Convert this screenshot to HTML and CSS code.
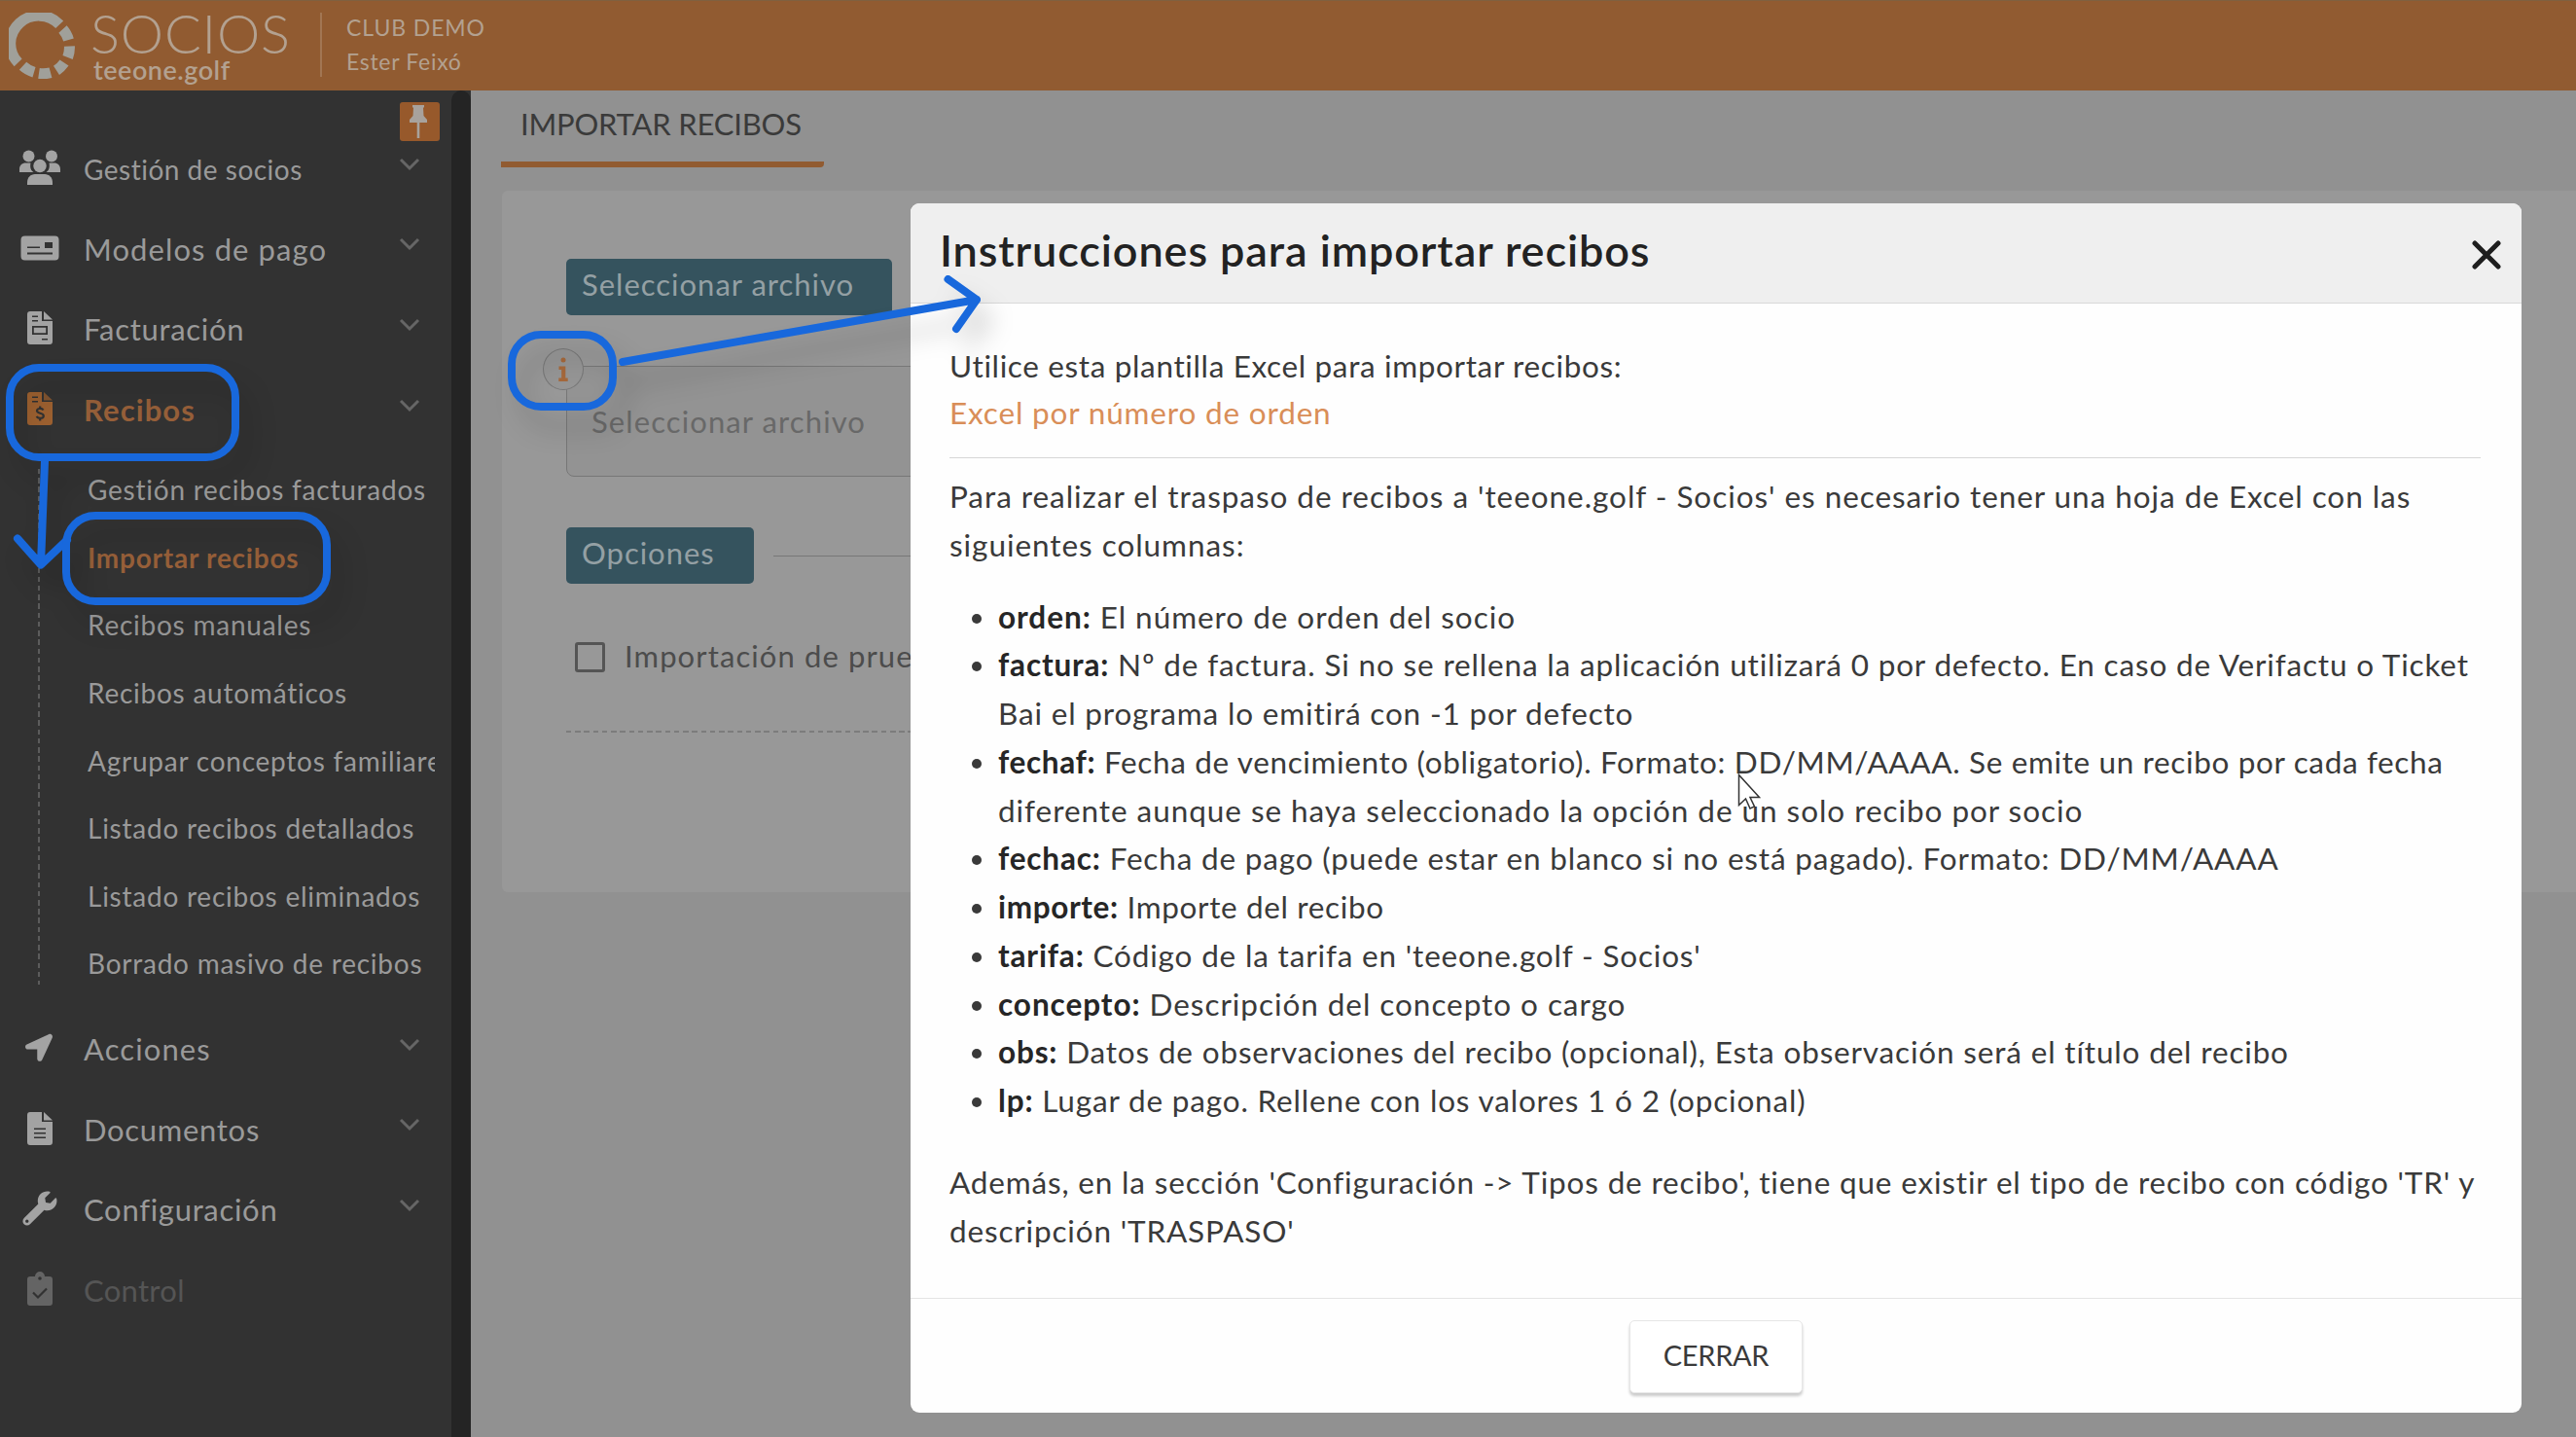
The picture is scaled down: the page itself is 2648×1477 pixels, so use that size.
FILE: index.html
```
<!DOCTYPE html>
<html lang="es">
<head>
  <meta charset="UTF-8">
  <meta name="viewport" content="width=device-width, initial-scale=1.0">
  <title>Socios - Importar recibos</title>
  <link rel="stylesheet" href="styles.css">
</head>
<body>
  <!-- Header -->
  <header class="topbar">
    <svg class="logo-ring" viewBox="0 0 68 68">
      <path d="M9.6 51.4A29 28.5 0 0 1 52.2 12.2" />
      <path d="M55.500 17A29 28.5 0 0 1 61.500 28" />
      <path d="M62.4 34.500A29 28.5 0 0 1 60.6 46" />
      <path d="M57 51.500A29 28.5 0 0 1 49 59.3" />
      <path d="M43 61.7A29 28.5 0 0 1 31 62.4" />
      <path d="M26 61.2A29 28.5 0 0 1 14.5 54.8" />
    </svg>
    <div class="brand">
      <div class="brand-name">SOCIOS</div>
      <div class="brand-site">teeone.golf</div>
    </div>
    <div class="account">
      <div class="account-club">CLUB DEMO</div>
      <div class="account-user">Ester Feixó</div>
    </div>
  </header>

  <div class="layout">
    <!-- Sidebar -->
    <aside class="sidebar">
      <nav class="menu">
        <div class="pin">
          <svg viewBox="0 0 18 34"><path d="M3 0h12v2.500h-1l.500 8.500 3.500 4v3h-7.700v16H7.700V18H0v-3l3.500-4L4 2.500H3z"/></svg>
        </div>
        <div class="menu-item small">
          <svg class="menu-icon" viewBox="0 0 42 36">
            <circle cx="9.5" cy="6.500" r="6"/><circle cx="33" cy="6.500" r="6"/>
            <path d="M0 23v-3c0-4 2.500-6.500 6.500-6.500h5c-1 5 .5 8 3 9.500zM42 23v-3c0-4-2.500-6.500-6.500-6.500h-5c1 5-.5 8-3 9.500z"/>
            <circle cx="21" cy="16.500" r="6.700"/>
            <path d="M8 36v-2.500c0-5 3.500-8.500 8-8.500h10c4.500 0 8 3.500 8 8.500V36z"/>
          </svg>
          <span class="menu-label">Gestión de socios</span>
          <svg class="chevron" viewBox="0 0 22 14"><path d="M2 2l9 9 9-9"/></svg>
        </div>
        <div class="menu-item">
          <svg class="menu-icon" viewBox="0 0 42 36">
            <path fill-rule="evenodd" d="M5.500 5.500h31a4 4 0 0 1 4 4v17a4 4 0 0 1-4 4h-31a4 4 0 0 1-4-4v-17a4 4 0 0 1 4-4zM26 12v6h8v-6zM8 16.500v1.500h13v-1.500zM8 22.500v2h26v-2z"/>
          </svg>
          <span class="menu-label loose">Modelos de pago</span>
          <svg class="chevron" viewBox="0 0 22 14"><path d="M2 2l9 9 9-9"/></svg>
        </div>
        <div class="menu-item">
          <svg class="menu-icon" viewBox="0 0 42 36">
            <path fill-rule="evenodd" d="M11 1h12v10h11v21a3 3 0 0 1-3 3H11a3 3 0 0 1-3-3V4a3 3 0 0 1 3-3zM13 5.500V7h6V5.500zM13 10v1.500h6V10zM13 16v9h16v-9zM14.800 17.800h12.400v5.400H14.800zM23 29v1.500h6V29z"/>
            <path d="M25 1l9 8.500h-9z"/>
          </svg>
          <span class="menu-label">Facturación</span>
          <svg class="chevron" viewBox="0 0 22 14"><path d="M2 2l9 9 9-9"/></svg>
        </div>
        <div class="menu-item active">
          <svg class="menu-icon" viewBox="0 0 42 36">
            <path fill-rule="evenodd" d="M11 1h12v10h11v21a3 3 0 0 1-3 3H11a3 3 0 0 1-3-3V4a3 3 0 0 1 3-3zM13 5.500V7h6V5.500zM13 10v1.500h6V10z"/>
            <path d="M25 1l9 8.500h-9z" opacity=".75"/>
            <path class="cut" d="M24.500 19.500c-1-2-6.500-2.300-6.500.7s6.800 2 6.800 5.200-6 3-7 .4M21.200 15.500v2.500M21.200 28v2.500"/>
          </svg>
          <span class="menu-label loose">Recibos</span>
          <svg class="chevron" viewBox="0 0 22 14"><path d="M2 2l9 9 9-9"/></svg>
        </div>
        <div class="submenu">
          <div class="submenu-item">Gestión recibos facturados</div>
          <div class="submenu-item active">Importar recibos</div>
          <div class="submenu-item">Recibos manuales</div>
          <div class="submenu-item">Recibos automáticos</div>
          <div class="submenu-item">Agrupar conceptos familiares</div>
          <div class="submenu-item">Listado recibos detallados</div>
          <div class="submenu-item">Listado recibos eliminados</div>
          <div class="submenu-item">Borrado masivo de recibos</div>
        </div>
        <div class="menu-item">
          <svg class="menu-icon" viewBox="-110 -70 768 658"><path d="M444.52 3.52L28.74 195.42c-47.97 22.39-31.98 92.75 19.19 92.75h175.91v175.91c0 51.17 70.36 67.17 92.75 19.19l191.9-415.78c15.99-38.39-25.59-79.97-63.97-63.97z"/></svg>
          <span class="menu-label loose">Acciones</span>
          <svg class="chevron" viewBox="0 0 22 14"><path d="M2 2l9 9 9-9"/></svg>
        </div>
        <div class="menu-item">
          <svg class="menu-icon" viewBox="0 0 42 36">
            <path fill-rule="evenodd" d="M11 1h12v10h11v21a3 3 0 0 1-3 3H11a3 3 0 0 1-3-3V4a3 3 0 0 1 3-3zM15 17.500V19h12v-1.500zM15 22v1.500h12V22zM15 26.500V28h12v-1.500z"/>
            <path d="M25 1l9 8.500h-9z"/>
          </svg>
          <span class="menu-label">Documentos</span>
          <svg class="chevron" viewBox="0 0 22 14"><path d="M2 2l9 9 9-9"/></svg>
        </div>
        <div class="menu-item">
          <svg class="menu-icon" viewBox="-50 0 614 512"><path d="M507.73 109.1c-2.24-9.03-13.54-12.09-20.12-5.51l-74.36 74.36-67.88-11.31-11.31-67.88 74.36-74.36c6.62-6.62 3.43-17.9-5.66-20.16-47.38-11.74-99.55.91-136.58 37.93-39.64 39.64-50.55 97.1-34.05 147.2L18.74 402.76c-24.99 24.99-24.99 65.51 0 90.5 24.99 24.99 65.51 24.99 90.5 0l213.21-213.21c50.12 16.71 107.47 5.68 147.37-34.22 37.07-37.07 49.7-89.32 37.91-136.73zM64 472c-13.25 0-24-10.75-24-24 0-13.26 10.75-24 24-24s24 10.74 24 24c0 13.25-10.75 24-24 24z"/></svg>
          <span class="menu-label">Configuración</span>
          <svg class="chevron" viewBox="0 0 22 14"><path d="M2 2l9 9 9-9"/></svg>
        </div>
        <div class="menu-item disabled">
          <svg class="menu-icon" viewBox="0 0 42 36">
            <path fill-rule="evenodd" d="M11 5h5a5 5 0 0 1 10 0h5a3 3 0 0 1 3 3v24a3 3 0 0 1-3 3H11a3 3 0 0 1-3-3V8a3 3 0 0 1 3-3zM21 5.200a1.800 1.800 0 1 0 0 3.600 1.800 1.800 0 0 0 0-3.600z"/>
            <path class="cut" d="M14 21.500l5 5 9-9"/>
          </svg>
          <span class="menu-label">Control</span>
        </div>
      </nav>
      <div class="sidebar-track"></div>
    </aside>

    <!-- Page content -->
    <main class="main">
      <div class="tab">IMPORTAR RECIBOS</div>
      <section class="panel">
        <div class="section-title">
          <span class="tag tag-file">Seleccionar archivo</span>
        </div>
        <div class="file-field">
          <span class="file-placeholder">Seleccionar archivo</span>
          <span class="info">
            <svg viewBox="0 0 12 26"><circle cx="6" cy="3" r="2.500"/><path d="M1.500 9.500h6.800v12h2.400V25H1.300v-3.500h2.900V13H1.500z"/></svg>
          </span>
        </div>
        <div class="section-title">
          <span class="tag tag-options">Opciones</span>
          <span class="rule"></span>
        </div>
        <label class="check-row">
          <span class="checkbox"></span>
          <span>Importación de prueba</span>
        </label>
        <div class="dashed"></div>
      </section>
    </main>
  </div>

  <!-- Modal -->
  <div class="modal">
    <div class="modal-header">
      <h1>Instrucciones para importar recibos</h1>
      <svg class="close" viewBox="0 0 30 30"><path d="M3 3l24 24M27 3L3 27"/></svg>
    </div>
    <div class="modal-body">
      <p class="intro"><span class="tight">Utilice esta plantilla Excel para importar recibos:</span><br><a class="link">Excel por número de orden</a></p>
      <p class="columns-text loose">Para realizar el traspaso de recibos a 'teeone.golf - Socios' es necesario tener una hoja de Excel con las<br>siguientes columnas:</p>
      <ul>
        <li class="loose"><b>orden:</b> El número de orden del socio</li>
        <li><b>factura:</b> Nº de factura. Si no se rellena la aplicación utilizará 0 por defecto. En caso de Verifactu o Ticket<br>Bai el programa lo emitirá con -1 por defecto</li>
        <li><span class="tight"><b>fechaf:</b> Fecha de vencimiento (obligatorio). Formato: DD/MM/AAAA. Se emite un recibo por cada fecha</span><br><span class="loose">diferente aunque se haya seleccionado la opción de un solo recibo por socio</span></li>
        <li><b>fechac:</b> Fecha de pago (puede estar en blanco si no está pagado). Formato: DD/MM/AAAA</li>
        <li class="tight"><b>importe:</b> Importe del recibo</li>
        <li><b>tarifa:</b> Código de la tarifa en 'teeone.golf - Socios'</li>
        <li class="loose"><b>concepto:</b> Descripción del concepto o cargo</li>
        <li><b>obs:</b> Datos de observaciones del recibo (opcional), Esta observación será el título del recibo</li>
        <li><b>lp:</b> Lugar de pago. Rellene con los valores 1 ó 2 (opcional)</li>
      </ul>
      <p>Además, en la sección 'Configuración -&gt; Tipos de recibo', tiene que existir el tipo de recibo con código 'TR' y<br>descripción 'TRASPASO'</p>
    </div>
    <div class="modal-footer">
      <button class="button">CERRAR</button>
    </div>
  </div>

  <!-- Guide marks and pointer -->
  <svg class="marks" viewBox="0 0 2648 1477">
    <g class="mark">
      <rect x="10" y="378" width="232" height="92" rx="30"/>
      <path d="M46 474L42 580M18 553.500L42 580.500L69 555"/>
      <rect x="68" y="530" width="268" height="88" rx="30"/>
      <rect x="526" y="344" width="104" height="74" rx="30"/>
      <path d="M640 372L1004 308M974.500 287L1004 308L983 338"/>
    </g>
    <path class="pointer" d="M1787.500 796.500v31l7-6.500 4.500 10 4.500-2-4.500-9.500h9.500z"/>
  </svg>
</body>
</html>
```
FILE: styles.css
```
:root {
  --orange: #915b31;
  --sidebar: #323232;
  --sidebar-text: #9a9a9a;
  --teal: #35535e;
  --mark: #1868dc;
  --text: #3a3a3a;
}

* {
  box-sizing: border-box;
}

body {
  margin: 0;
  width: 2648px;
  height: 1477px;
  overflow: hidden;
  position: relative;
  display: flex;
  flex-direction: column;
  background: #919191;
  color: var(--text);
  font-family: Lato, "Liberation Sans", sans-serif;
  white-space: nowrap;
}

/* Header */
.topbar {
  height: 93px;
  flex: none;
  display: flex;
  padding: 12px 0 0 9px;
  background: var(--orange);
  border-top: 1px solid #80603f;
  color: #b3a190;
}

.logo-ring {
  width: 68px;
  height: 68px;
  fill: none;
  stroke: #a0a09a;
  stroke-width: 11;
}

.brand {
  width: 236px;
  margin-left: 16px;
}

.brand-name {
  font-size: 56px;
  font-weight: 300;
  line-height: 46px;
  margin-top: -2px;
  letter-spacing: 0.8px;
}

.brand-site {
  margin: 1px 0 0 3px;
  font-size: 27px;
  font-weight: 600;
  line-height: 27px;
  letter-spacing: 0.5px;
}

.account {
  height: 66px;
  padding-left: 25px;
  border-left: 2px solid #a27653;
  font-size: 23px;
  line-height: 35px;
  letter-spacing: 0.7px;
}

.account-club {
  margin-top: -2px;
  letter-spacing: 0.9px;
}

.layout {
  flex: 1;
  display: flex;
  min-height: 0;
}

/* Sidebar */
.sidebar {
  width: 484px;
  display: flex;
  background: var(--sidebar);
  color: var(--sidebar-text);
}

.menu {
  width: 464px;
  padding-top: 12px;
}

.sidebar-track {
  width: 20px;
  background: #242424;
  border-radius: 10px 10px 0 0;
}

.pin {
  width: 41px;
  height: 40px;
  margin: 0 0 -13px 411px;
  display: flex;
  justify-content: center;
  align-items: center;
  background: #97592b;
  border-radius: 3px;
}

.pin svg {
  width: 18px;
  height: 34px;
  margin-right: 4px;
  fill: #a8a29c;
}

.menu-item {
  height: 82.6px;
  display: flex;
  align-items: center;
  padding-left: 20px;
  font-size: 31px;
  letter-spacing: 0.7px;
}

.menu-item.small {
  font-size: 28px;
  letter-spacing: 0.5px;
}

.menu-icon {
  width: 42px;
  height: 36px;
  margin: -2px 24px 0 0;
  fill: #a3a3a3;
}

.menu-icon .cut {
  fill: none;
  stroke: var(--sidebar);
  stroke-width: 2.2;
}

.menu-label {
  width: 324px;
}

.menu-label.loose {
  letter-spacing: 1.1px;
}

.menu-item.small .menu-label {
  padding-top: 2px;
}

.chevron {
  width: 22px;
  height: 14px;
  margin-top: -9px;
  fill: none;
  stroke: #666;
  stroke-width: 3;
}

.menu-item.active {
  color: #965f39;
  font-weight: bold;
}

.menu-item.active .menu-icon {
  fill: #9c6030;
}

.menu-item.disabled {
  color: #555;
  letter-spacing: 0.3px;
}

.menu-item.disabled .menu-icon {
  fill: #646464;
}

.submenu {
  padding: 7px 17px 11px 90px;
  font-size: 28px;
  letter-spacing: 0.76px;
  background: repeating-linear-gradient(#5c5c5c 0 5.5px, transparent 5.5px 9.23px) 39px 20px / 2px 530px no-repeat;
}

.submenu-item {
  height: 69.55px;
  line-height: 69.55px;
  overflow: hidden;
}

.submenu-item.active {
  color: #965f39;
  font-weight: bold;
}

/* Page content */
.main {
  flex: 1;
  padding-left: 31px;
}

.tab {
  width: 332px;
  height: 79px;
  padding-left: 20px;
  border-bottom: 6px solid var(--orange);
  border-radius: 0 0 4px 0;
  font-size: 31px;
  line-height: 68px;
  letter-spacing: -0.2px;
}

.panel {
  height: 721px;
  margin: 24px 0 0 1px;
  padding: 70px 90px 0 66px;
  background: #989898;
  border-radius: 6px 0 0 6px;
}

.section-title {
  display: flex;
  align-items: center;
}

.tag {
  height: 58px;
  padding-left: 16px;
  background: var(--teal);
  border-radius: 5px;
  color: #94a0a4;
  font-size: 31px;
  line-height: 52px;
  letter-spacing: 1px;
}

.tag-file {
  width: 335px;
}

.tag-options {
  width: 193px;
}

.rule {
  flex: 1;
  margin-left: 20px;
  border-top: 1px solid #777;
}

.file-field {
  position: relative;
  height: 114px;
  margin: 52px 0;
  padding-left: 25px;
  border: 1px solid #777;
  border-radius: 8px;
  background: #939393;
  color: #686868;
  font-size: 31px;
  line-height: 112px;
  letter-spacing: 1.1px;
}

.info {
  position: absolute;
  top: -19px;
  left: -25px;
  width: 42px;
  height: 43px;
  display: flex;
  justify-content: center;
  align-items: center;
  background: #959595;
  border: 1px solid #777;
  border-radius: 50%;
}

.info svg {
  width: 12px;
  height: 26px;
  fill: #a5683b;
}

.check-row {
  display: flex;
  align-items: center;
  height: 50px;
  margin-top: 49px;
  padding-left: 9px;
  font-size: 31px;
  letter-spacing: 1.1px;
  color: #4c4c4c;
}

.checkbox {
  width: 31px;
  height: 31px;
  margin: 2px 20px 0 0;
  border: 3px solid #555;
  border-radius: 3px;
}

.dashed {
  margin-top: 52px;
  height: 2px;
  background: repeating-linear-gradient(90deg, #7c7c7c 0 5.5px, transparent 5.5px 9.25px);
}

/* Modal */
.modal {
  position: absolute;
  top: 209px;
  left: 936px;
  width: 1656px;
  height: 1243px;
  display: flex;
  flex-direction: column;
  background: #fefefe;
  border-radius: 9px;
  overflow: hidden;
}

.modal-header {
  height: 103px;
  display: flex;
  justify-content: space-between;
  padding: 0 21px 0 30px;
  background: #efefef;
  border-bottom: 1px solid #d8d8d8;
}

.modal-header h1 {
  margin: 0;
  color: #222;
  font-size: 45px;
  font-weight: 600;
  line-height: 96px;
  letter-spacing: 0.9px;
}

.close {
  width: 30px;
  height: 30px;
  margin-top: 38px;
  fill: none;
  stroke: #1e1e1e;
  stroke-width: 5;
  stroke-linecap: round;
}

.modal-body {
  flex: 1;
  padding: 40px 42px 0 40px;
  font-size: 31.5px;
  line-height: 49.75px;
  letter-spacing: 0.83px;
}

.modal-body .tight {
  letter-spacing: 0.64px;
}

.modal-body .loose {
  letter-spacing: 0.95px;
}

.modal-body p {
  margin: 0;
}

.modal-body .intro {
  height: 119px;
  border-bottom: 1px solid #d6d6d6;
  line-height: 48px;
}

.link {
  color: #d98e58;
}

.modal-body .columns-text {
  margin-top: 15px;
}

.modal-body ul {
  margin: 24px 0 34px;
  padding-left: 50px;
}

.modal-body b {
  color: #262626;
}

.modal-footer {
  height: 118px;
  padding-top: 22px;
  border-top: 1px solid #e4e4e4;
  text-align: center;
}

.button {
  width: 178px;
  height: 75px;
  padding: 0 0 5px;
  background: #fff;
  border: 1px solid #e6e6e6;
  border-radius: 5px;
  box-shadow: 0 3px 3px rgba(0, 0, 0, 0.2);
  color: var(--text);
  font-family: inherit;
  font-size: 29px;
  letter-spacing: -0.3px;
}

/* Guide marks */
.marks {
  position: absolute;
  top: 0;
  left: 0;
  width: 2648px;
  height: 1477px;
}

.mark {
  fill: none;
  stroke: var(--mark);
  stroke-width: 8;
  stroke-linecap: round;
  stroke-linejoin: round;
  filter: drop-shadow(12px 20px 12px rgba(0, 0, 0, 0.18));
}

.pointer {
  fill: #fff;
  stroke: #333;
  stroke-width: 1.5;
}
```
